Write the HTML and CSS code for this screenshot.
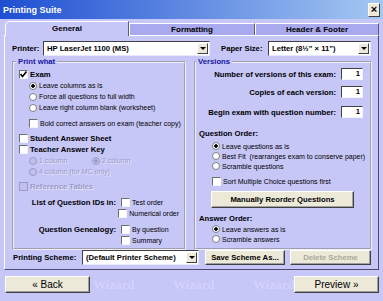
FILE: index.html
```html
<!DOCTYPE html>
<html lang="en">
<head>
    <meta charset="UTF-8">
    <title>Printing Suite</title>
    <link rel="stylesheet" href="styles.css">
</head>
<body>
    <div class="window">
        <div class="titlebar">
            <span class="title">Printing Suite</span>
            <span class="close">×</span>
        </div>

        <div class="tabs">
            <div class="tab tab-general active">General</div>
            <div class="tab tab-format">Formatting</div>
            <div class="tab tab-header">Header &amp; Footer</div>
        </div>

        <div class="panel">
            <div class="top-row">
                <span class="lbl printer-lbl">Printer:</span>
                <div class="select printer"><span>HP LaserJet 1100 (MS)</span><i class="arrow"></i></div>
                <span class="lbl paper-lbl">Paper Size:</span>
                <div class="select paper"><span>Letter (8½" × 11")</span><i class="arrow"></i></div>
            </div>

            <div class="groups">
                <fieldset class="group group-left">
                    <legend>Print what</legend>
                    <div class="row"><span class="cb"><svg width="7" height="7" viewBox="0 0 7 7"><polyline points="0.5,3 2.5,5.5 6.5,0.5" fill="none" stroke="#000" stroke-width="1.6"/></svg></span><span class="lbl">Exam</span></div>
                    <div class="row ind"><span class="rd on"></span>Leave columns as is</div>
                    <div class="row ind"><span class="rd"></span>Force all questions to full width</div>
                    <div class="row ind"><span class="rd"></span>Leave right column blank (worksheet)</div>
                    <div class="row ind gap5"><span class="cb"></span>Bold correct answers on exam (teacher copy)</div>
                    <div class="row gap4"><span class="cb"></span><span class="lbl">Student Answer Sheet</span></div>
                    <div class="row"><span class="cb"></span><span class="lbl">Teacher Answer Key</span></div>
                    <div class="row ind off">
                        <span class="opt"><span class="rd"></span>1 column</span>
                        <span class="opt"><span class="rd on"></span>2 column</span>
                    </div>
                    <div class="row ind off"><span class="rd"></span>4 column (for MC only)</div>
                    <div class="row gap4 off"><span class="cb"></span><span class="lbl">Reference Tables</span></div>
                    <div class="row gap5"><span class="lbl side">List of Question IDs in:</span><span class="cb"></span>Test order</div>
                    <div class="row"><span class="side"></span><span class="cb"></span>Numerical order</div>
                    <div class="row gap5"><span class="lbl side">Question Genealogy:</span><span class="cb"></span>By question</div>
                    <div class="row"><span class="side"></span><span class="cb"></span>Summary</div>
                </fieldset>

                <fieldset class="group group-right">
                    <legend>Versions</legend>
                    <div class="row num first"><span class="lbl">Number of versions of this exam:</span><span class="num-box">1</span></div>
                    <div class="row num second"><span class="lbl">Copies of each version:</span><span class="num-box">1</span></div>
                    <div class="row num third"><span class="lbl">Begin exam with question number:</span><span class="num-box">1</span></div>

                    <div class="row head q-head"><span class="lbl">Question Order:</span></div>
                    <div class="row sub first-sub"><span class="rd on"></span>Leave questions as is</div>
                    <div class="row sub"><span class="rd"></span>Best Fit&nbsp; (rearranges exam to conserve paper)</div>
                    <div class="row sub"><span class="rd"></span>Scramble questions</div>
                    <div class="row sub gap5"><span class="cb"></span>Sort Multiple Choice questions first</div>
                    <button class="btn reorder">Manually Reorder Questions</button>

                    <div class="row head a-head"><span class="lbl">Answer Order:</span></div>
                    <div class="row sub first-sub"><span class="rd on"></span>Leave answers as is</div>
                    <div class="row sub"><span class="rd"></span>Scramble answers</div>
                </fieldset>
            </div>

            <div class="scheme-row">
                <span class="lbl scheme-lbl">Printing Scheme:</span>
                <div class="select scheme"><span>(Default Printer Scheme)</span><i class="arrow"></i></div>
                <button class="btn save">Save Scheme As...</button>
                <button class="btn delete" disabled>Delete Scheme</button>
            </div>
        </div>

        <div class="footer">
            <button class="btn nav">« Back</button>
            <div class="marks">
                <span>Wizard</span>
                <span>Wizard</span>
                <span>Wizard</span>
            </div>
            <button class="btn nav">Preview »</button>
        </div>
    </div>
</body>
</html>
```

FILE: styles.css
```css
body {
    margin: 0;
    background-color: #c6c6f7;
    font-family: "Liberation Sans", Arial, sans-serif;
    font-size: 7px;
    color: #000;
}

.window {
    width: 383px;
    height: 301px;
    background-color: #c6c6f7;
    overflow: hidden;
}

/* title bar */
.titlebar {
    height: 19px;
    box-sizing: border-box;
    padding: 0 3px 0 3px;
    display: flex;
    align-items: center;
    justify-content: space-between;
    background: linear-gradient(to right, #1e4ed2, #a4c8f2);
}

.title {
    color: #fff;
    font-weight: bold;
    font-size: 9px;
}

.close {
    width: 12px;
    height: 14px;
    box-sizing: border-box;
    background-color: #ece9d8;
    border: 1px solid;
    border-color: #fff #404040 #404040 #fff;
    font-weight: bold;
    font-size: 11px;
    line-height: 11px;
    text-align: center;
}

/* tabs */
.tabs {
    display: flex;
    height: 16px;
    padding-left: 5px;
}

.tab {
    margin-top: 4px;
    height: 12px;
    box-sizing: border-box;
    background-color: #a9a9ee;
    border: 1px solid #fff;
    border-right-color: #5a5a80;
    border-bottom: none;
    font-size: 8px;
    font-weight: bold;
    text-align: center;
    line-height: 11px;
}

.tab-general { width: 124px; }
.tab-format { width: 126px; }
.tab-header { width: 124px; }

.tab.active {
    position: relative;
    z-index: 1;
    margin-top: 2px;
    height: 15px;
    background-color: #c6c6f7;
    border-top-left-radius: 5px;
    line-height: 13px;
}

/* tab panel */
.panel {
    margin: 0 4px;
    padding: 5px 6px 4px 7px;
    border: 1px solid;
    border-color: #fff #4a4a70 #4a4a70 #fff;
}

.lbl {
    font-size: 7.7px;
    font-weight: bold;
}

.top-row, .scheme-row {
    display: flex;
    align-items: center;
    height: 15px;
}

.printer-lbl { width: 31px; }
.paper-lbl { width: 47px; margin-left: 11px; }
.scheme-lbl { width: 69px; margin-left: 1px; }

.select {
    height: 15px;
    box-sizing: border-box;
    display: flex;
    align-items: center;
    padding-left: 3px;
    background-color: #fff;
    border: 1px solid;
    border-color: #404040 #e8e8ff #e8e8ff #404040;
    font-size: 7.7px;
    font-weight: bold;
}

.select span {
    flex: 1;
    white-space: nowrap;
    overflow: hidden;
}

.printer { width: 167px; }
.paper { width: 103px; }
.scheme { width: 117px; }

.arrow {
    width: 11px;
    height: 11px;
    margin-right: 1px;
    box-sizing: border-box;
    display: flex;
    align-items: center;
    justify-content: center;
    background-color: #ece9d8;
    border: 1px solid;
    border-color: #fff #404040 #404040 #fff;
}

.arrow::after {
    content: "";
    border-left: 3px solid transparent;
    border-right: 3px solid transparent;
    border-top: 3px solid #000;
}

/* group boxes */
.groups {
    display: grid;
    grid-template-columns: 174px 1fr;
    column-gap: 8px;
    height: 193px;
    margin-top: 1px;
}

.group {
    margin: 0;
    min-width: 0;
    padding: 2px 5px 2px 5px;
    border: 2px groove #eeeeff;
}

legend {
    margin-left: -3px;
    padding: 0 2px;
    line-height: 10px;
    font-size: 7.7px;
    font-weight: bold;
    color: #1818a0;
}

.group-right {
    padding-left: 3px;
}

.row {
    display: flex;
    align-items: center;
    height: 11px;
    white-space: nowrap;
}

.ind { padding-left: 10px; }
.gap4 { margin-top: 4px; }
.gap5 { margin-top: 5px; }

.cb {
    width: 9px;
    height: 9px;
    flex: none;
    box-sizing: border-box;
    display: flex;
    align-items: center;
    justify-content: center;
    margin-right: 2px;
    background-color: #fff;
    border: 1px solid;
    border-color: #707070 #f4f4ff #f4f4ff #707070;
}

.rd {
    width: 8px;
    height: 8px;
    flex: none;
    box-sizing: border-box;
    margin-right: 2px;
    border-radius: 50%;
    background-color: #fff;
    border: 1px solid #808080;
}

.rd.on {
    background: radial-gradient(circle, #000 0 1.5px, #fff 2px);
}

.opt {
    display: flex;
    align-items: center;
    width: 63px;
}

.off {
    color: #9a9ac6;
    text-shadow: 1px 1px 0 #e8e8ff;
}

.off .cb, .off .rd {
    background-color: #c0c0ea;
    border-color: #9a9ac6;
}

.off .rd.on {
    background: radial-gradient(circle, #9a9ac6 0 1.5px, #c0c0ea 2px);
}

.side {
    width: 97px;
    margin-right: 5px;
    text-align: right;
}

/* versions */
.num {
    justify-content: flex-end;
    height: 12px;
    padding-right: 2px;
}

.num-box {
    width: 22px;
    height: 12px;
    box-sizing: border-box;
    margin-left: 5px;
    padding-right: 2px;
    background-color: #fff;
    border: 1px solid;
    border-color: #404040 #f4f4ff #f4f4ff #404040;
    font-size: 7.7px;
    font-weight: bold;
    line-height: 10px;
    text-align: right;
}

.first { margin-top: -1px; }
.second { margin-top: 6px; }
.third { margin-top: 8px; }

.q-head { margin-top: 10px; }
.a-head { margin-top: 5px; height: 10px; }

.sub {
    height: 10px;
    padding-left: 13px;
}

.first-sub { margin-top: 2px; }
.a-head + .first-sub { margin-top: 1px; }

/* buttons */
.btn {
    height: 15px;
    box-sizing: border-box;
    padding: 0;
    background-color: #ece9d8;
    border: 1px solid;
    border-color: #fff #404040 #404040 #fff;
    box-shadow: inset -1px -1px 0 #a0a0a0;
    font-family: "Liberation Sans", Arial, sans-serif;
    font-size: 7.7px;
    font-weight: bold;
    color: #000;
    cursor: pointer;
}

.reorder {
    display: block;
    width: 143px;
    height: 17px;
    margin: 5px 0 0 12px;
}

.save {
    width: 80px;
    margin-left: 6px;
}

.delete {
    width: 81px;
    margin-left: 5px;
    color: #a8a89c;
}

/* footer */
.footer {
    display: flex;
    padding: 6px 4px 0 5px;
}

.nav {
    width: 85px;
    height: 17px;
    flex: none;
    font-size: 10px;
    font-weight: normal;
}

.marks {
    flex: 1;
    display: flex;
    overflow: hidden;
    padding-left: 3px;
}

.marks span {
    width: 80px;
    flex: none;
    font-family: "Liberation Serif", serif;
    font-weight: bold;
    font-size: 13px;
    line-height: 17px;
    color: #d3d3fb;
}
```
